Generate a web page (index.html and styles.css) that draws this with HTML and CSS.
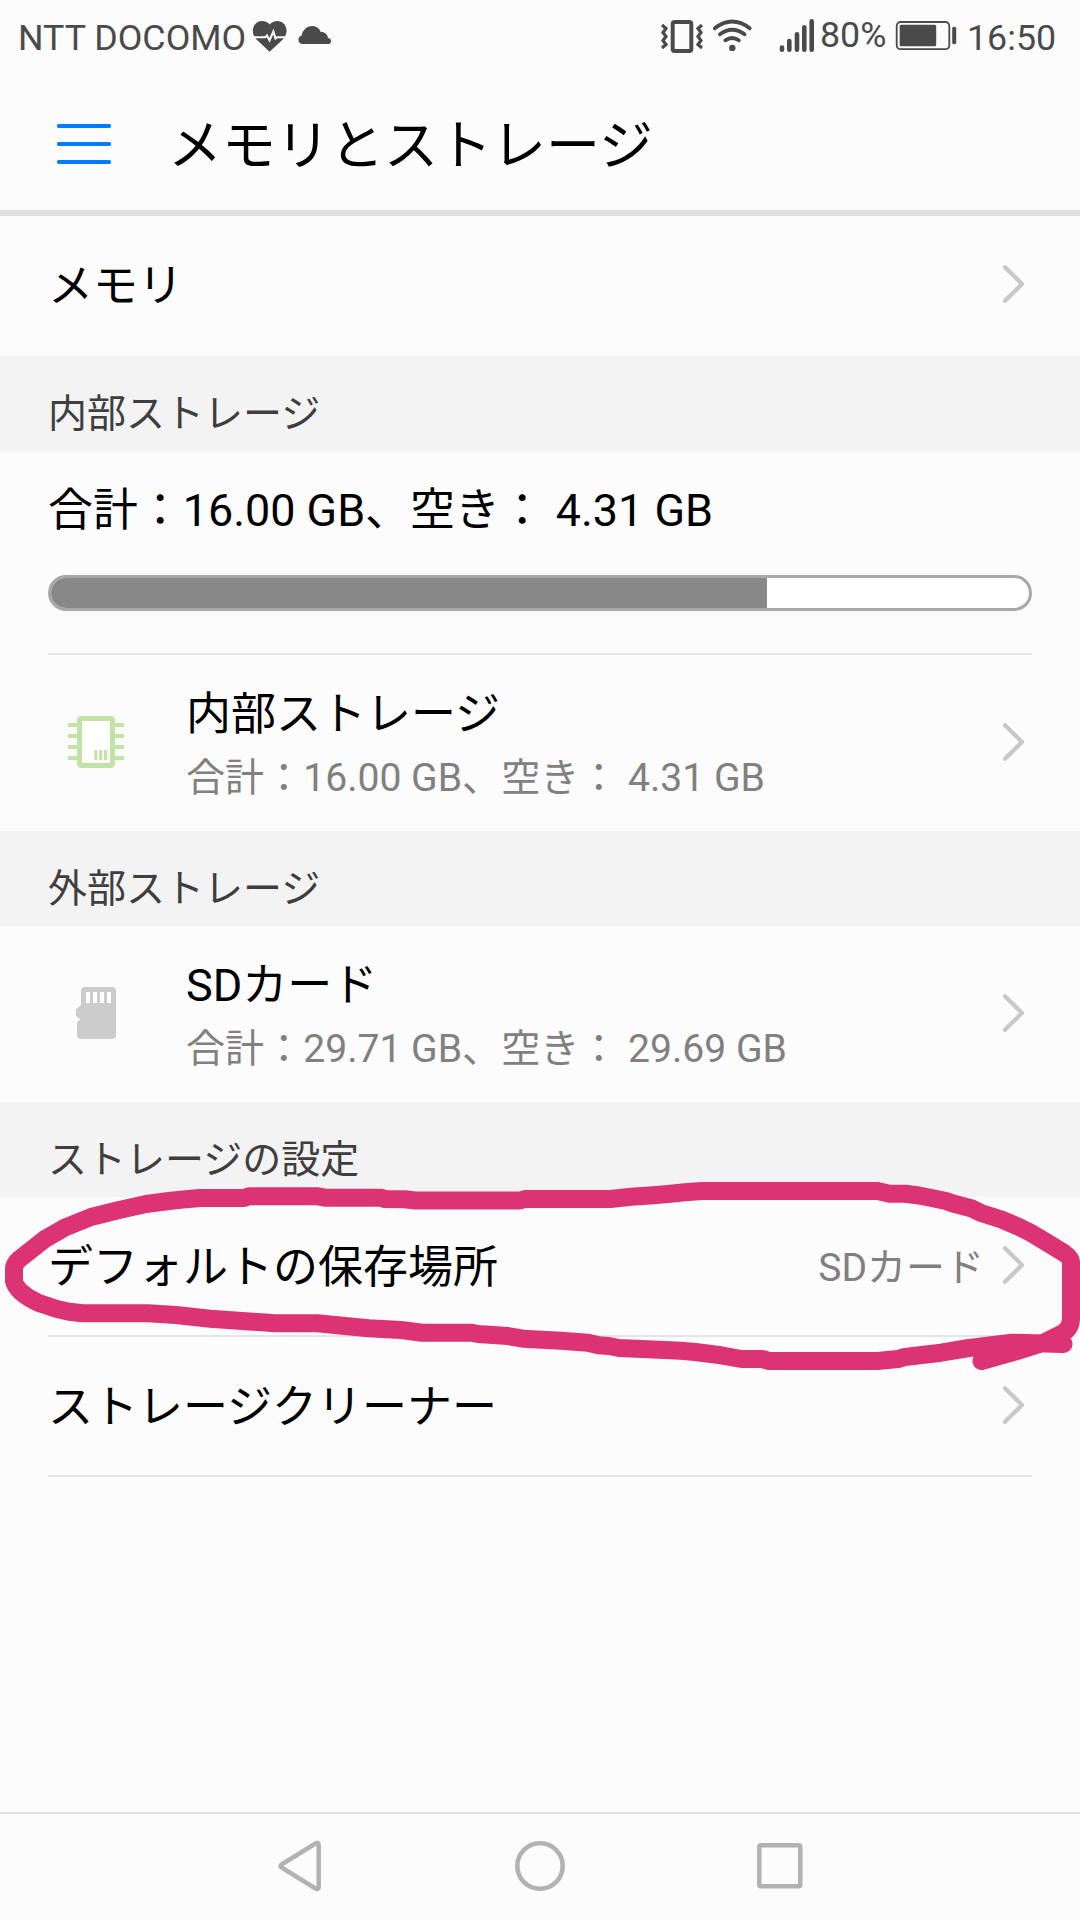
FILE: index.html
```html
<!DOCTYPE html>
<html lang="ja">
<head>
<meta charset="utf-8">
<title>メモリとストレージ</title>
<link rel="stylesheet" href="styles.css">
</head>
<body>
<div class="screen">
  <header class="status">
    <span class="status-text carrier">NTT DOCOMO</span>
    <svg class="status-icon" width="36" height="70" viewBox="252 0 36 70">
      <path fill="#4a4a4a" d="M269.600 51.700L256.500 39.500C253.300 36 252.600 32.500 252.900 29.500C253.500 24.500 257.500 21 262 21C265.300 21 268 22.300 269.700 24.500C271.400 22.300 274.200 21 277.500 21C282 21 286 24.500 286.500 29.500C286.800 32.500 286 36 282.800 39.500Z"/>
      <path fill="none" stroke="#fcfcfc" stroke-width="2" d="M252 37.300H265.300L267 35.500L269.500 40.500L273.400 31.500L275.500 38.500L277 37.300H288"/>
    </svg>
    <svg class="status-icon cloud" width="36" height="70" viewBox="296 0 36 70">
      <path fill="#4a4a4a" d="M302 44A4.200 4.200 0 0 1 301.500 35.800C302.500 30 307 26 312 26C316.500 26 319.500 28.500 320.700 32C324.500 31.500 327.500 34 328 38C330 38.200 331.200 39.500 331 41.500C331 43 330 44 328.500 44Z"/>
    </svg>
    <div class="status-right">
      <svg width="46" height="70" viewBox="660 0 46 70" fill="none" stroke="#4a4a4a">
        <rect x="672.700" y="22" width="18.600" height="29" rx="2" stroke-width="4"/>
        <path stroke-width="3.200" d="M662 25L666 28.500L663 32.500L666 36.500L663 40.500L666 44.500L662 48M702 25L698 28.500L701 32.500L698 36.500L701 40.500L698 44.500L702 48"/>
      </svg>
      <svg width="68" height="70" viewBox="706 0 68 70" fill="none" stroke="#4a4a4a" stroke-width="3.800" stroke-linecap="round">
        <path d="M714.800 28.300Q732.200 14.700 749.700 28.300M720 34.300Q732.200 25.300 744.500 34.300M725.300 40.300Q732.200 35.700 738.800 40.300"/>
        <circle cx="732.300" cy="47.900" r="3.200" fill="#4a4a4a" stroke="none"/>
      </svg>
      <svg width="46" height="70" viewBox="774 0 46 70" fill="none" stroke="#4a4a4a" stroke-width="4.600" stroke-linecap="round">
        <path d="M782 47.500V49.700M789.300 41V49.700M797 34.300V49.700M804.300 27.300V49.700M811.700 21.300V49.700"/>
      </svg>
      <span class="status-text percent">80%</span>
      <svg class="battery" width="64" height="70" viewBox="894 0 64 70">
        <rect x="896.700" y="22" width="52.600" height="27.200" rx="4" fill="none" stroke="#4a4a4a" stroke-width="1.800"/>
        <rect x="899.700" y="24.700" width="36.500" height="21.500" rx="1.500" fill="#4a4a4a"/>
        <rect x="952.200" y="26.700" width="4" height="17.500" rx="1.800" fill="#4a4a4a"/>
      </svg>
      <span class="status-text clock">16:50</span>
    </div>
  </header>

  <div class="titlebar">
    <svg width="54" height="42" viewBox="0 0 54 42"><path stroke="#007dff" stroke-width="4.200" stroke-linecap="round" d="M2 3H52M2 21H52M2 39H52"/></svg>
    <h1 class="title">メモリとストレージ</h1>
  </div>

  <main class="content">
    <div class="row memory">
      <span class="label">メモリ</span>
      <svg class="chevron" viewBox="0 0 22 38"><path d="M2 2.200L19 19L2 35.800"/></svg>
    </div>

    <h2 class="section">内部ストレージ</h2>
    <div class="usage">
      <div class="label">合計：16.00 GB、空き： 4.31 GB</div>
      <div class="bar"><div class="bar-fill" style="width:73.2%"></div></div>
    </div>
    <div class="row volume">
      <svg class="volume-icon" width="60" height="56" viewBox="0 0 60 56">
        <path stroke="#c1e3a5" stroke-width="4" d="M2 11H14M2 22H14M2 33H14M2 44H14M46 11H58M46 22H58M46 33H58M46 44H58"/>
        <rect x="13.500" y="4.500" width="33" height="47" rx="2" fill="#fff" stroke="#c1e3a5" stroke-width="5"/>
        <path stroke="#c1e3a5" stroke-width="3" d="M29.800 36V46M34.700 36V46M39.600 36V46"/>
      </svg>
      <div class="volume-text">
        <div class="label">内部ストレージ</div>
        <div class="detail">合計：16.00 GB、空き： 4.31 GB</div>
      </div>
      <svg class="chevron" viewBox="0 0 22 38"><path d="M2 2.200L19 19L2 35.800"/></svg>
    </div>

    <h2 class="section">外部ストレージ</h2>
    <div class="row volume">
      <svg class="volume-icon" width="60" height="56" viewBox="0 0 60 56">
        <path fill="#ccc" d="M19 2H46Q50 2 50 6V50Q50 54 46 54H15Q11 54 11 50V37L14.500 34.500L10 31V24.500L15 20V6Q15 2 19 2Z"/>
        <path stroke="#fff" stroke-width="4" d="M22 7V18M29 7V18M36 7V18M43 7V18"/>
      </svg>
      <div class="volume-text">
        <div class="label">SDカード</div>
        <div class="detail">合計：29.71 GB、空き： 29.69 GB</div>
      </div>
      <svg class="chevron" viewBox="0 0 22 38"><path d="M2 2.200L19 19L2 35.800"/></svg>
    </div>

    <h2 class="section">ストレージの設定</h2>
    <div class="row setting">
      <span class="label">デフォルトの保存場所</span>
      <span class="value">SDカード</span>
      <svg class="chevron" viewBox="0 0 22 38"><path d="M2 2.200L19 19L2 35.800"/></svg>
    </div>
    <div class="row setting">
      <span class="label">ストレージクリーナー</span>
      <svg class="chevron" viewBox="0 0 22 38"><path d="M2 2.200L19 19L2 35.800"/></svg>
    </div>
  </main>

  <nav class="navbar">
    <svg width="50" height="54" viewBox="275 1839 50 54"><path d="M281.500 1864.500 315.500 1843.500Q318.700 1842 318.700 1845V1887Q318.700 1890 315.500 1888.500L281.500 1867.500Q280 1866 281.500 1864.500Z"/></svg>
    <svg width="54" height="54" viewBox="513 1839 54 54"><circle cx="540" cy="1866" r="22.700"/></svg>
    <svg width="50" height="54" viewBox="755 1839 50 54"><rect x="759.300" y="1845.200" width="41" height="41" rx="1.500"/></svg>
  </nav>

  <svg class="marker" width="1080" height="200" viewBox="0 1180 1080 200">
    <path d="M981.500 1361L1015 1351.700L1043 1343L1063 1333Q1071 1328 1071 1318V1262Q1071 1258 1064 1253L1046 1242L1031 1233L1019 1227L1001.500 1219.500L981 1213L972 1208.500L953 1203.500L946 1201L934 1198.500L919 1195.500L905 1193.700H889.500L877.500 1191H702L685 1192.300L668 1194L650 1195.500L631 1196.700L610.600 1199H525L520 1200.500H415L405 1199.300L385 1199L380.500 1197.700H325L318 1196.300H249L244 1198H200L183 1199.500L169 1201L146 1204L117 1210.500L91 1217L65 1227.500L45 1239L19 1259.500Q14 1264 14 1269V1281Q15 1286 20.700 1291.700Q28 1298 38 1302.700L57 1309L69 1311.700L82.600 1313.300H148L175.600 1315L194.500 1317L210 1318.700L253 1321.700L275.500 1323.300H317L368.500 1328.300L401 1330L422 1332.700H472L478 1334L508 1336L523 1338.700L561 1340.700L588 1342.700L598.500 1345.300L609 1346L619 1348L681 1350.700L695 1352L721 1355.300L741.500 1359H762L769 1361H877.500L898 1359L905 1357L941 1352.700L969 1348L1012 1342.700L1063.500 1344"/>
  </svg>
</div>
</body>
</html>
```

FILE: styles.css
```css
* { box-sizing: border-box; }

body {
  margin: 0;
  background: #fcfcfc;
  font-family: Roboto, "Noto Sans CJK JP", sans-serif;
  color: #000;
}

.screen {
  position: relative;
  display: flex;
  flex-direction: column;
  width: 1080px;
  height: 1920px;
  overflow: hidden;
}

svg { display: block; flex: none; }

.status {
  display: flex;
  height: 70px;
  padding-left: 18px;
}

.status-text {
  font-size: 35.800px;
  line-height: 76px;
  color: #4a4a4a;
  white-space: nowrap;
}

.carrier { width: 234px; }
.cloud { margin-left: 8px; }

.status-right {
  display: flex;
  margin-left: auto;
  width: 420px;
}

.percent { width: 74px; line-height: 70px; }
.clock { padding-left: 9px; }

.titlebar {
  display: flex;
  align-items: center;
  gap: 57px;
  height: 146px;
  padding: 8px 57px 0;
  border-bottom: 6px solid #e0e0e0;
}

.title {
  margin: 0;
  padding-top: 5px;
  font-size: 54px;
  font-weight: 400;
  line-height: 80px;
}

.content {
  flex: 1;
}

.row {
  display: flex;
  align-items: center;
  margin: 0 48px;
  padding: 0 7px 2px 0;
}

.memory {
  height: 140px;
  padding-bottom: 4px;
}

.volume { height: 176px; }

.setting {
  height: 140px;
  border-bottom: 2px solid #e5e5e5;
}

.label {
  font-size: 45px;
  line-height: 60px;
  white-space: pre;
}

.row > .label { padding-top: 6px; }

.section {
  height: 95px;
  margin: 0;
  padding: 22px 48px 0;
  background: #f3f3f3;
  color: #3e3e3e;
  font-size: 39px;
  font-weight: 400;
  line-height: 73px;
}

.section + .usage .label { font-size: 44.900px; }

.usage {
  height: 204px;
  margin: 0 48px;
  padding-top: 30px;
  border-bottom: 2px solid #e5e5e5;
}

.bar {
  height: 36px;
  margin-top: 34px;
  border: 3px solid #a8a8a8;
  border-radius: 18px;
  background: #fff;
  overflow: hidden;
}

.bar-fill {
  height: 100%;
  background: #888;
}

.volume-icon { margin-left: 18px; }
.volume-text {
  margin-left: 60px;
  padding-top: 9px;
}

.detail {
  font-size: 39.080px;
  line-height: 60px;
  margin-top: 3px;
  color: #808080;
  white-space: pre;
}

.value {
  margin-left: auto;
  padding-top: 6px;
  font-size: 39px;
  line-height: 60px;
  color: #808080;
}

.chevron {
  width: 22px;
  height: 38px;
  margin-left: auto;
  fill: none;
  stroke: #c8c8c8;
  stroke-width: 4.200;
  stroke-linecap: round;
  stroke-linejoin: round;
}

.value + .chevron { margin-left: 19px; }

.navbar {
  display: flex;
  justify-content: center;
  gap: 188px;
  height: 108px;
  padding-top: 25px;
  border-top: 2px solid #e0e0e0;
}

.navbar svg {
  fill: none;
  stroke: #b2b2b2;
  stroke-width: 4.500;
}

/* Hand-drawn ring laid over the default location row */
.marker {
  position: absolute;
  left: 0;
  top: 1180px;
  fill: none;
  stroke: #dc3374;
  stroke-width: 18;
  stroke-linecap: round;
  stroke-linejoin: round;
  pointer-events: none;
}
```
